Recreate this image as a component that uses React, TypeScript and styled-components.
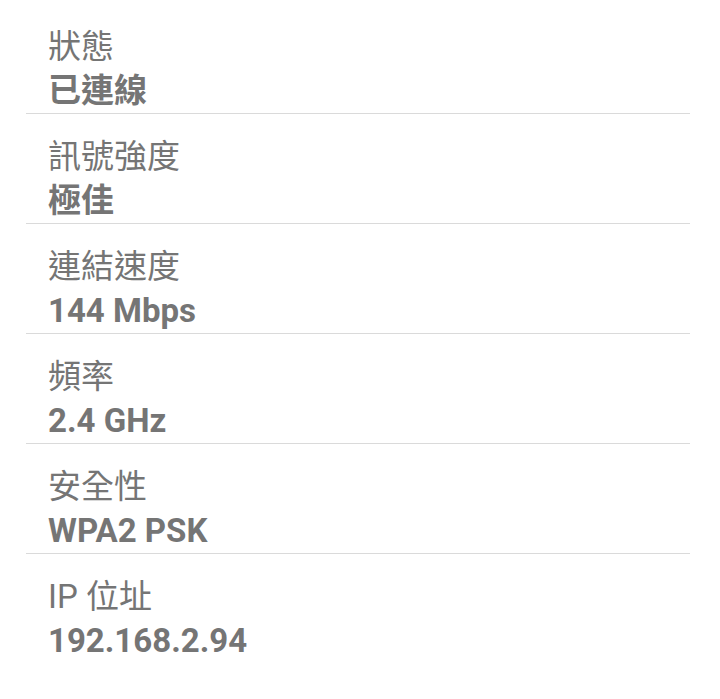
import React from "react";
import styled, { createGlobalStyle } from "styled-components";

const GlobalStyle = createGlobalStyle`
  html, body {
    margin: 0;
    padding: 0;
    background: #ffffff;
  }
  body {
    font-family: Roboto, "Noto Sans CJK TC", "Noto Sans", sans-serif;
    -webkit-font-smoothing: antialiased;
  }
`;

const List = styled.div`
  display: flex;
  flex-direction: column;
  padding: 4px 30px 0 26px;
`;

const Item = styled.div<{ $last?: boolean }>`
  display: flex;
  flex-direction: column;
  padding: 21px 0 0 22px;
  border-bottom: ${(p) => (p.$last ? "none" : "1px solid #dadada")};
`;

const Label = styled.div`
  font-size: 33px;
  line-height: 44px;
  font-weight: 400;
  color: #757575;
  white-space: nowrap;
`;

const Value = styled.div`
  font-size: 33px;
  line-height: 44px;
  font-weight: 700;
  color: #757575;
  white-space: nowrap;
`;

const rows: { label: string; value: string }[] = [
  { label: "狀態", value: "已連線" },
  { label: "訊號強度", value: "極佳" },
  { label: "連結速度", value: "144 Mbps" },
  { label: "頻率", value: "2.4 GHz" },
  { label: "安全性", value: "WPA2 PSK" },
  { label: "IP 位址", value: "192.168.2.94" },
];

export default function App() {
  return (
    <>
      <GlobalStyle />
      <List>
        {rows.map((r, i) => (
          <Item key={r.label} $last={i === rows.length - 1}>
            <Label>{r.label}</Label>
            <Value>{r.value}</Value>
          </Item>
        ))}
      </List>
    </>
  );
}
